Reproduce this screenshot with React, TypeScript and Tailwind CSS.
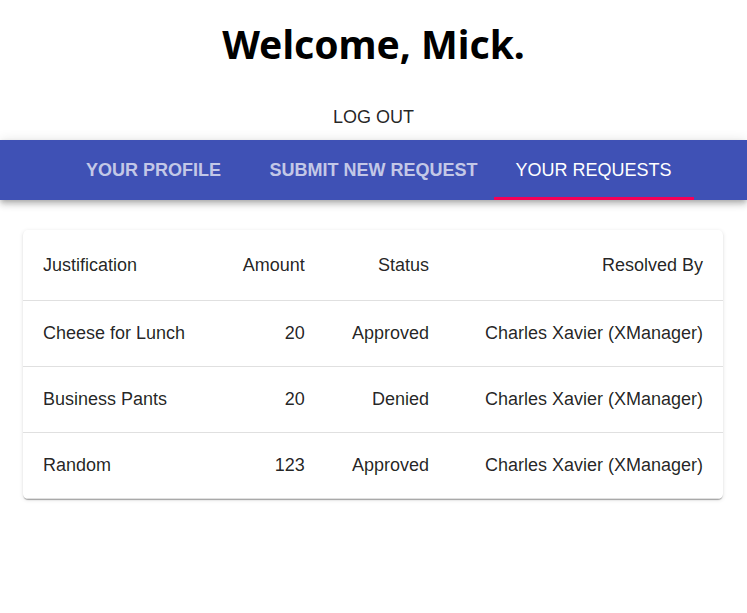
const rows = [
  { justification: "Cheese for Lunch", amount: 20, status: "Approved", resolvedBy: "Charles Xavier (XManager)" },
  { justification: "Business Pants", amount: 20, status: "Denied", resolvedBy: "Charles Xavier (XManager)" },
  { justification: "Random", amount: 123, status: "Approved", resolvedBy: "Charles Xavier (XManager)" },
];

const tabClass = "relative flex h-full shrink-0 items-center justify-center text-lg uppercase";
const headClass = "border-b border-[#e0e0e0] px-5 font-normal";
const cellClass = "border-b border-[#e0e0e0] px-5 pt-4 pb-[18px]";

export default function App() {
  return (
    <div className="min-h-screen bg-white font-['Liberation_Sans',Arial,sans-serif] text-lg text-black/87">
      <h1 className="pt-4 text-center font-['Noto_Sans','Open_Sans',sans-serif] text-[39px] leading-14 font-bold text-black">
        Welcome, Mick.
      </h1>
      <div className="flex justify-center pt-[33px] pb-[11px]">
        <button type="button" className="px-2 text-lg leading-6 uppercase">Log out</button>
      </div>
      <header className="h-15 bg-[#3f51b5] shadow-[0_2px_5px_-1px_rgba(0,0,0,0.2),0_5px_6px_0_rgba(0,0,0,0.14),0_1px_12px_0_rgba(0,0,0,0.12)]">
        <nav className="flex h-full justify-center">
          <button type="button" className={`${tabClass} w-50 font-bold text-white/70`}>Your Profile</button>
          <button type="button" className={`${tabClass} w-60 font-bold text-white/70`}>Submit New Request</button>
          <button type="button" aria-current="page" className={`${tabClass} w-50 text-white`}>
            Your Requests
            <span className="absolute inset-x-0 bottom-0 h-[3px] bg-[#f50057]" />
          </button>
        </nav>
      </header>
      <main className="pt-[30px] pr-6 pb-8 pl-[23px]">
        <div className="overflow-hidden rounded-[5px] shadow-[0_2px_1px_-1px_rgba(0,0,0,0.2),0_1px_1px_0_rgba(0,0,0,0.14),0_1px_4px_0_rgba(0,0,0,0.12)]">
          <table className="w-full border-separate border-spacing-0">
            <thead>
              <tr className="h-[71px]">
                <th className={`${headClass} text-left`}>Justification</th>
                <th className={`${headClass} text-right`}>Amount</th>
                <th className={`${headClass} text-right`}>Status</th>
                <th className={`${headClass} text-right`}>Resolved By</th>
              </tr>
            </thead>
            <tbody>
              {rows.map((r) => (
                <tr key={r.justification} className="h-[66px]">
                  <td className={cellClass}>{r.justification}</td>
                  <td className={`${cellClass} text-right`}>{r.amount}</td>
                  <td className={`${cellClass} text-right`}>{r.status}</td>
                  <td className={`${cellClass} text-right`}>{r.resolvedBy}</td>
                </tr>
              ))}
            </tbody>
          </table>
        </div>
      </main>
    </div>
  );
}
